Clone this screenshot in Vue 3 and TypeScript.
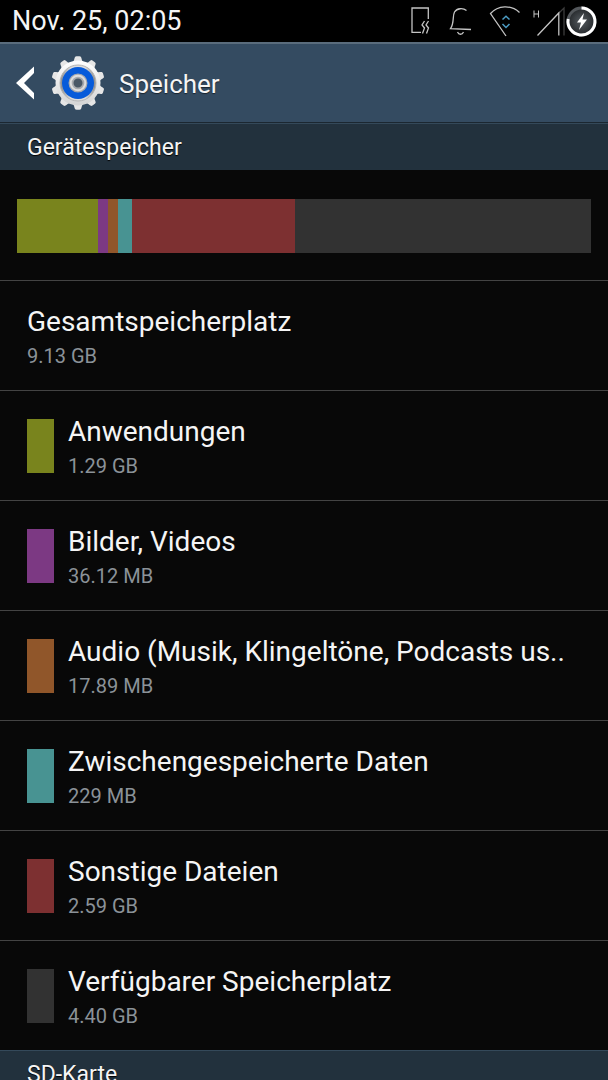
<script setup lang="ts">
interface Category {
  name: string
  size: string
  color?: string
  share: number
}

const categories: Category[] = [
  { name: 'Gesamtspeicherplatz', size: '9.13 GB', share: 0 },
  { name: 'Anwendungen', size: '1.29 GB', color: '#79841d', share: 81 },
  { name: 'Bilder, Videos', size: '36.12 MB', color: '#7c3983', share: 10 },
  { name: 'Audio (Musik, Klingeltöne, Podcasts us..', size: '17.89 MB', color: '#90562a', share: 10 },
  { name: 'Zwischengespeicherte Daten', size: '229 MB', color: '#489392', share: 14 },
  { name: 'Sonstige Dateien', size: '2.59 GB', color: '#7d3031', share: 163 },
  { name: 'Verfügbarer Speicherplatz', size: '4.40 GB', color: '#323232', share: 296 },
]

const segments = categories.filter((c) => c.share > 0)
const teeth = Array.from({ length: 10 }, (_, i) => i * 36)
</script>

<template>
  <div class="screen">
    <div class="status">
      <time class="clock">Nov. 25, 02:05</time>
      <div class="indicators">
        <svg width="24" height="42" viewBox="410 0 24 42" class="line">
          <path d="M421 32.300H412V8H428.300V19" />
          <path d="M424.500 21l-2.500 4 2.500 3-2 5.500M428.500 21l-2.500 4 2.500 3-2 5.500" />
        </svg>
        <svg width="26" height="42" viewBox="448 0 26 42" class="line">
          <path d="M466.500 10.500C463 7.800 457 8 454.500 12C452.300 16 454.500 23 450.500 28.700L471 29.500" />
          <path d="M457.500 32c1.300 3 4.700 3 6 0" />
        </svg>
        <svg width="30" height="42" viewBox="488 0 30 42" class="line">
          <path d="M506 36L490.500 13.500C498 5 511 4.500 519.500 12.500" />
          <path class="arrows" d="M502.500 19.500l3.500-3.300 3.500 3.300M502.500 24l3.500 3.500 3.500-3.500" />
        </svg>
        <div class="power">
          <svg width="34" height="42" viewBox="532 0 34 42" class="line">
            <path class="small" d="M534 10.500v7M538.500 10.500v7M534 14h4.500" />
            <path class="dim" d="M559 13l5-5v27.500" />
            <path d="M537.500 35.500L558.800 13V35.500" />
          </svg>
          <svg width="32" height="42" viewBox="566 0 32 42">
            <defs>
              <radialGradient id="cell"><stop offset="0" stop-color="#555b60" /><stop offset="1" stop-color="#25282b" /></radialGradient>
            </defs>
            <circle cx="581.500" cy="21.500" r="13.500" fill="url(#cell)" stroke="#53575b" stroke-width="3" />
            <path d="M581.500 8a13.500 13.500 0 1 1-13.300 11" fill="none" stroke="#fff" stroke-width="3" />
            <path d="M584 13L577 22.500h4l-2 7.500 8-10.500h-4.500z" fill="#fff" />
          </svg>
        </div>
      </div>
    </div>

    <header class="actionbar">
      <button class="back" type="button" aria-label="Zurück">
        <svg width="20" height="36" viewBox="0 0 20 36"><path d="M19 1.500V8L9 18l10 10v6.500L1 18z" fill="#fff" /></svg>
      </button>
      <svg class="gear" width="56" height="56" viewBox="-28 -28 56 56">
        <defs>
          <linearGradient id="metal" x1="0" y1="0" x2="0" y2="1"><stop offset="0" stop-color="#fff" /><stop offset="1" stop-color="#d4d4d4" /></linearGradient>
          <linearGradient id="ring" x1="0" y1="0" x2="1" y2="0"><stop offset="0" stop-color="#888" /><stop offset=".3" stop-color="#ddd" /><stop offset=".7" stop-color="#ddd" /><stop offset="1" stop-color="#888" /></linearGradient>
        </defs>
        <g fill="#e6e6e6">
          <path v-for="angle in teeth" :key="angle" :transform="`rotate(${angle})`" d="M-6-20C-3.500-22-4-24-3-26Q-2.500-26.700-1.500-26.700H1.500Q2.500-26.700 3-26C4-24 3.500-22 6-20z" />
        </g>
        <circle r="22.500" fill="url(#metal)" />
        <circle r="18" fill="url(#ring)" stroke="#b5b5b5" />
        <circle r="16" fill="#075bda" />
        <circle r="7" fill="#4a5866" stroke="#a7aaae" stroke-width="5" />
        <circle r="7.300" fill="none" stroke="#dedede" stroke-width="2" />
      </svg>
      <h1>Speicher</h1>
    </header>

    <main>
      <h2>Gerätespeicher</h2>
      <div class="usage">
        <div class="bar">
          <span v-for="s in segments" :key="s.name" :style="{ flexGrow: s.share, background: s.color }"></span>
        </div>
      </div>
      <ul>
        <li v-for="c in categories" :key="c.name">
          <span v-if="c.color" class="swatch" :style="{ background: c.color }"></span>
          <div class="label">
            <div class="name">{{ c.name }}</div>
            <div class="size">{{ c.size }}</div>
          </div>
        </li>
      </ul>
      <h2>SD-Karte</h2>
    </main>
  </div>
</template>

<style>
html,
body {
  background: #080808;
}
body {
  margin: 0;
}
</style>

<style scoped>
.screen {
  height: 100vh;
  overflow: hidden;
  background: #080808;
  color: #f5f5f5;
  font-family: Roboto, sans-serif;
}
.status {
  display: flex;
  align-items: center;
  justify-content: space-between;
  height: 42px;
  padding: 0 10px 0 12px;
  background: #000;
}
.clock {
  font-size: 27px;
  line-height: 44px;
}
.indicators {
  display: flex;
  gap: 14px;
}
.power {
  display: flex;
}
svg {
  display: block;
  flex: none;
  overflow: visible;
}
.line {
  fill: none;
  stroke: #c4c4c4;
  stroke-width: 1.3;
}
.arrows {
  stroke: #4c9cc4;
  stroke-width: 1.5;
}
.dim {
  stroke: #3c3c3c;
}
.small {
  stroke-width: 1;
}
.actionbar {
  box-sizing: border-box;
  display: flex;
  align-items: center;
  height: 81px;
  padding-left: 15px;
  border-top: 2px solid #5a6c7c;
  border-bottom: 1px solid #1b2731;
  background: #344b61;
}
.back {
  width: 20px;
  margin-right: 15px;
  padding: 0;
  border: 0;
  background: none;
}
h1 {
  margin: 0 0 0 13px;
  padding-top: 2px;
  font-size: 26px;
  font-weight: 400;
  line-height: 32px;
  text-shadow: 0 1px 1px #0008;
}
h2 {
  box-sizing: border-box;
  height: 47px;
  margin: 0;
  padding-left: 27px;
  border-top: 1px solid #34495a;
  background: #22313d;
  font-size: 23px;
  font-weight: 400;
  line-height: 48px;
  text-shadow: 0 1px 1px #000;
}
.usage {
  padding: 29px 17px 27px;
}
.bar {
  display: flex;
  height: 54px;
}
.bar span {
  flex-basis: 0;
}
ul {
  margin: 0;
  padding: 0;
  list-style: none;
}
li {
  box-sizing: border-box;
  display: flex;
  align-items: center;
  gap: 14px;
  height: 110px;
  padding: 0 27px;
  border-top: 1px solid #434343;
}
.swatch {
  flex: none;
  width: 27px;
  height: 54px;
}
.label {
  min-width: 0;
  white-space: nowrap;
}
.name {
  font-size: 28px;
  line-height: 40px;
}
.size {
  color: #8b9298;
  font-size: 20px;
  line-height: 28px;
}
</style>
